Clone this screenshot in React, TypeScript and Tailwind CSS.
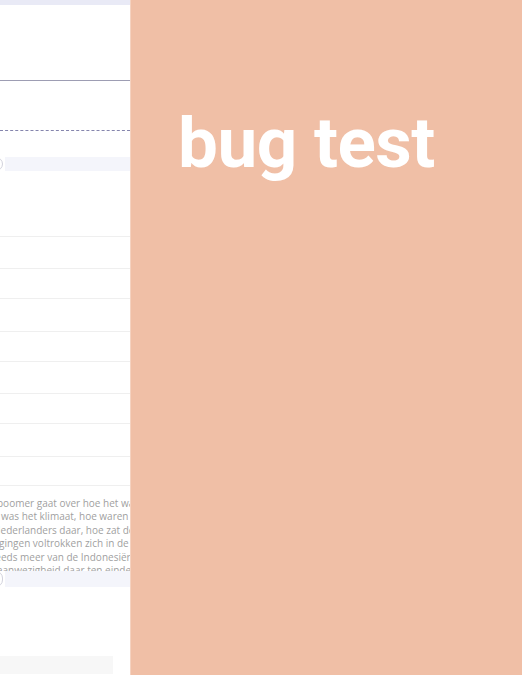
const rows = [32, 30, 33, 30, 32, 30, 33, 29];

const lines = [
  { text: "boomer gaat over hoe het was in Indië", ml: "-ml-[3px]" },
  { text: "was het klimaat, hoe waren de", ml: "ml-[1px]" },
  { text: "Nederlanders daar, hoe zat de", ml: "-ml-[7px]" },
  { text: "wijzigingen voltrokken zich in de", ml: "-ml-[21px]" },
  { text: "steeds meer van de Indonesiërs", ml: "-ml-[13px]" },
  { text: "aanwezigheid daar ten einde", ml: "-ml-[3px]" },
];

const Pill = ({ h }: { h: string }) => (
  <div className="flex items-center -ml-[11px] shrink-0">
    <div className={`w-[14px] ${h} rounded-full border border-[#d2d2dc] bg-white shrink-0`} />
    <div className={`flex-1 ${h} bg-[#f4f5fb] ml-[2px]`} />
  </div>
);

const App = () => {
  return (
    <main className="flex w-[522px] h-[675px] overflow-hidden bg-white">
      <section
        className="w-[130px] shrink-0 overflow-hidden flex flex-col"
        style={{ fontFamily: '"Open Sans", "Liberation Sans", sans-serif' }}
      >
        <div className="h-[5px] bg-[#e9eaf6] shrink-0" />
        <div className="h-[75px] shrink-0" />
        <div className="border-t border-[#9d9db3]" />
        <div className="h-[49px] shrink-0" />
        <div className="border-t border-dashed border-[#8585ad]" />
        <div className="h-[26px] shrink-0" />
        <Pill h="h-[14px]" />
        <div className="h-[66px] border-b border-[#efefef] shrink-0" />
        {rows.map((h, i) => (
          <div
            key={i}
            className="border-b border-[#efefef] shrink-0"
            style={{ height: h }}
          />
        ))}
        <div className="h-[85px] pt-[11px] overflow-hidden shrink-0 text-[10px] leading-[13.4px] text-[#9f9f9f]">
          {lines.map((l) => (
            <div key={l.text} className={`whitespace-nowrap ${l.ml}`}>
              {l.text}
            </div>
          ))}
        </div>
        <Pill h="h-[16px]" />
        <div className="h-[69px] shrink-0" />
        <div className="w-[113px] h-[18px] bg-[#f7f7f7] shrink-0" />
      </section>
      <section className="flex-1 bg-[#f0bfa6] border-l border-[#f5d2c0] pl-[47px]">
        <h1
          className="mt-[101px] text-[71px] leading-[83px] font-bold text-white tracking-[-0.5px]"
          style={{ fontFamily: 'Roboto, "Liberation Sans", sans-serif' }}
        >
          bug test
        </h1>
      </section>
    </main>
  );
};

export default App;
